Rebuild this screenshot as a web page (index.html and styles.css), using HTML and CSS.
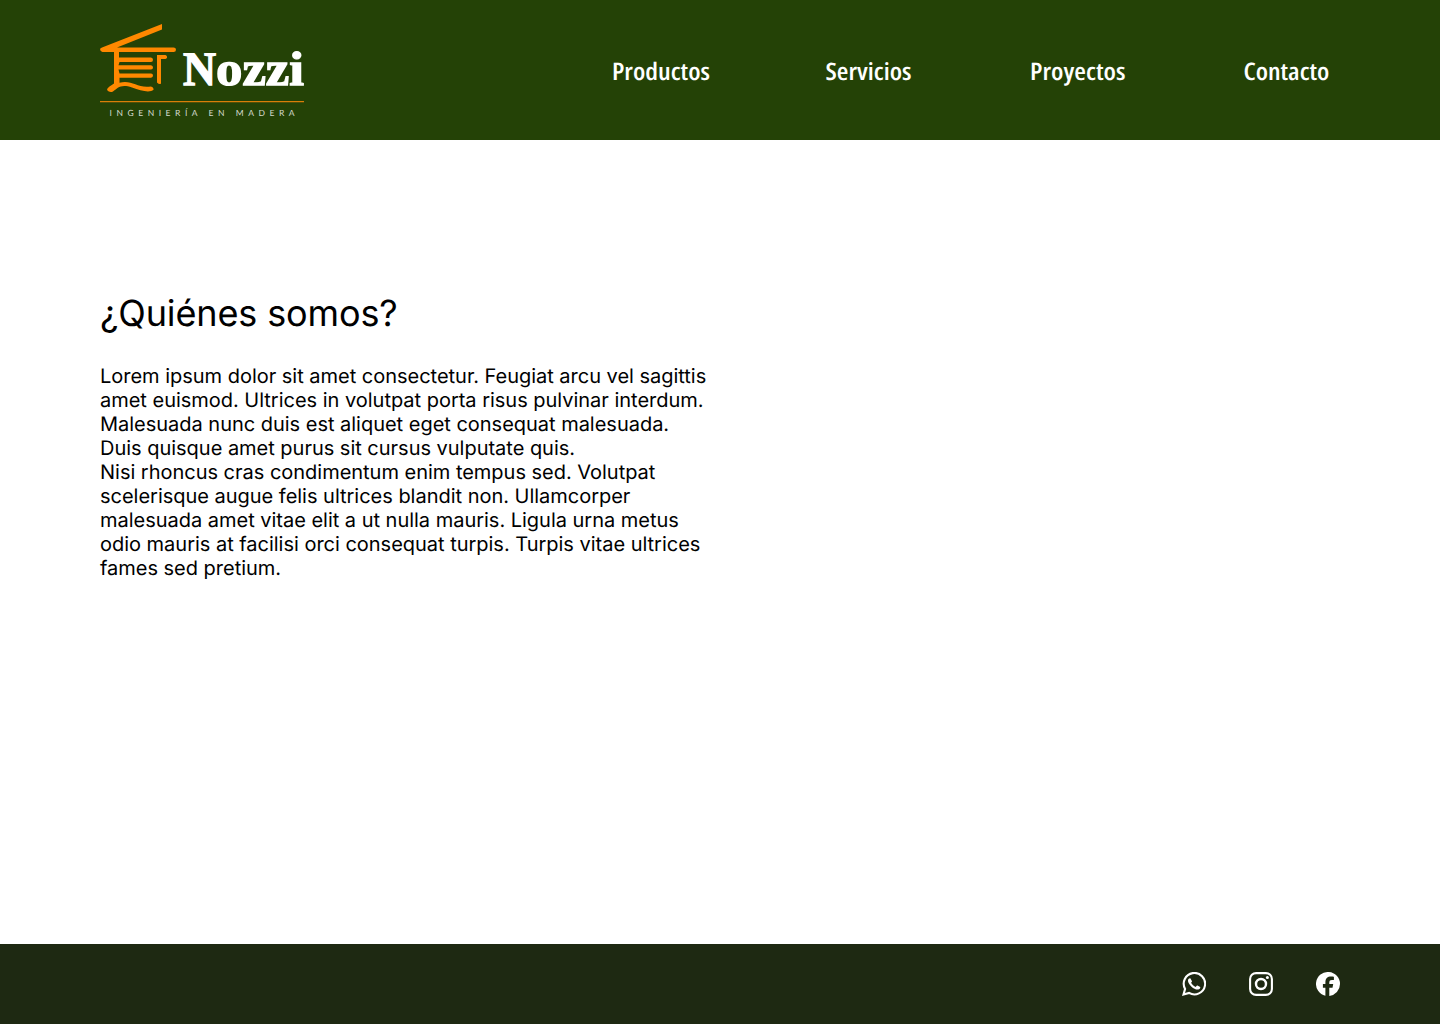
FILE: index.html
```html
<!DOCTYPE html>
<html lang="es">
<head>
<meta charset="utf-8">
<title>Nozzi - Ingeniería en madera</title>
<link rel="stylesheet" href="styles.css">
</head>
<body>
<header class="header">
  <a class="logo" aria-label="Nozzi">
    <svg width="206" height="96" viewBox="100 22 206 96">
      <g class="logo-house">
        <path d="M162 24V29.500L117 47.500H173.500Q176 47.500 176 49.700Q176 52 173.500 52H119V57.600H151Q153 57.800 153 59.800Q153 62 151 62H119.500L118.500 65.300H151Q153 65.500 153 67.400Q153 69.500 151 69.500H118.500L119.500 73.500H151Q153 73.700 153 75.600Q153 77.700 151 77.700H119.500V82.800C132 79.500 137 88.500 151 86.400Q154 87 153.500 89.700C150 93 141 91 132 87.500C121 83.500 117.500 88 113 91.500Q109.500 93 107 90Q107 88 109.500 86.500L114 83.500V52H102.500Q99.500 51 100.300 48.500L102 47.500Z"/>
        <path d="M157 55H165.500Q167.500 55.500 167 58L165.500 59H161V83.500Q159.500 85 157 82.500Z"/>
      </g>
      <path class="logo-rule" d="M100 101.600H304"/>
      <text class="logo-name" y="85.200"><tspan x="183" textLength="33" lengthAdjust="spacingAndGlyphs">N</tspan><tspan x="216" textLength="88" lengthAdjust="spacingAndGlyphs">ozzi</tspan></text>
      <text class="logo-tagline" x="109.500" y="115.700" textLength="185">INGENIERÍA EN MADERA</text>
    </svg>
  </a>
  <nav class="nav">
    <a class="nav-link"><svg width="98" height="40"><text x="0" y="30" textLength="98" lengthAdjust="spacingAndGlyphs">Productos</text></svg></a>
    <a class="nav-link"><svg width="86" height="40"><text x="-1.500" y="30" textLength="86" lengthAdjust="spacingAndGlyphs">Servicios</text></svg></a>
    <a class="nav-link"><svg width="96" height="40"><text x="0" y="30" textLength="95.500" lengthAdjust="spacingAndGlyphs">Proyectos</text></svg></a>
    <a class="nav-link"><svg width="86" height="40"><text x="0.400" y="30" textLength="86" lengthAdjust="spacingAndGlyphs">Contacto</text></svg></a>
  </nav>
</header>
<main class="about">
  <h1 class="about-title">¿Quiénes somos?</h1>
  <p class="about-text">Lorem ipsum dolor sit amet consectetur. Feugiat arcu vel sagittis<br>amet euismod. Ultrices in volutpat porta risus pulvinar interdum.<br>Malesuada nunc duis est aliquet eget consequat malesuada.<br>Duis quisque amet purus sit cursus vulputate quis.<br>Nisi rhoncus cras condimentum enim tempus sed. Volutpat<br>scelerisque augue felis ultrices blandit non. Ullamcorper<br>malesuada amet vitae elit a ut nulla mauris. Ligula urna metus<br>odio mauris at facilisi orci consequat turpis. Turpis vitae ultrices<br>fames sed pretium.</p>
</main>
<footer class="footer">
  <svg class="social" viewBox="0 0 24 24" aria-label="WhatsApp">
    <path class="line" d="M1.500 22.500L3.100 16.900A10.700 10.700 0 1 1 7.100 20.950Z"/>
    <path d="M8.300 6.300C7.900 6.200 7 6.300 6.500 7.100C5 9.300 7.100 12.500 9.500 14.700C12 17 15 18.200 17 17.300C18.200 16.700 18.400 15.600 18.200 15L15.500 13.500C14.900 13.300 14.600 13.900 13.700 14.900C12 14.500 9.900 12.500 9.100 10.800C9.600 10.200 10.200 9.700 9.900 9Z"/>
  </svg>
  <svg class="social" viewBox="0 0 24 24" aria-label="Instagram">
    <rect class="line" x="1.100" y="1.100" width="21.800" height="21.800" rx="6"/>
    <circle class="line thick" cx="12" cy="12" r="5"/>
    <circle cx="18.400" cy="5.600" r="1.500"/>
  </svg>
  <svg class="social" viewBox="0 0 24 24" aria-label="Facebook">
    <path d="M24 12A12 12 0 1 0 9.400 23.700V15.700H6.900V12H9.400V10.400C9.400 6.300 11.300 4.400 15.300 4.400C16.100 4.400 17.400 4.500 17.900 4.700V8L16 7.900C14.100 7.900 13.300 8.600 13.300 10.600V12H17.200L16.500 15.700H13.300V23.900A12 12 0 0 0 24 12Z"/>
  </svg>
</footer>
</body>
</html>
```
FILE: styles.css
```css
* {
  box-sizing: border-box;
}

body {
  margin: 0;
  min-height: 1024px;
  display: flex;
  flex-direction: column;
  background: #fff;
  color: #000;
  font-family: Inter, sans-serif;
  text-rendering: geometricPrecision;
}

.header {
  height: 140px;
  padding: 0 111px 0 100px;
  display: flex;
  align-items: center;
  justify-content: space-between;
  background: #244206;
}

.logo,
.logo svg,
.nav-link svg {
  display: block;
}

.nav-link svg {
  overflow: visible;
}

.logo-house {
  fill: #ff8800;
}

.logo-rule {
  stroke: #d97e08;
  stroke-width: 1.2;
}

.logo-name {
  fill: #fff;
  stroke: #fff;
  stroke-width: 1.3;
  font: bold 48px "Liberation Serif", serif;
}

.logo-tagline {
  fill: #d3dacd;
  font: 8.5px Lato, sans-serif;
}

.nav {
  width: 717px;
  display: flex;
  justify-content: space-between;
}

.nav-link text {
  fill: #fff;
  font: 600 24px "Open Sans", sans-serif;
  font-stretch: 75%;
}

.about {
  flex: 1;
  padding: 151px 100px 0;
}

.about-title {
  margin: 0 0 29px;
  font-size: 36px;
  line-height: 44px;
  font-weight: 400;
  letter-spacing: -0.12px;
}

.about-text {
  margin: 0;
  font-size: 20px;
  line-height: 24px;
  letter-spacing: -0.018px;
}

.footer {
  height: 80px;
  padding-right: 100px;
  display: flex;
  align-items: center;
  justify-content: flex-end;
  gap: 43px;
  background: #1e2912;
}

.social {
  width: 24px;
  height: 24px;
  fill: #fff;
}

.social .line {
  fill: none;
  stroke: #fff;
  stroke-width: 2.1;
}

.social .thick {
  stroke-width: 2.4;
}
```
